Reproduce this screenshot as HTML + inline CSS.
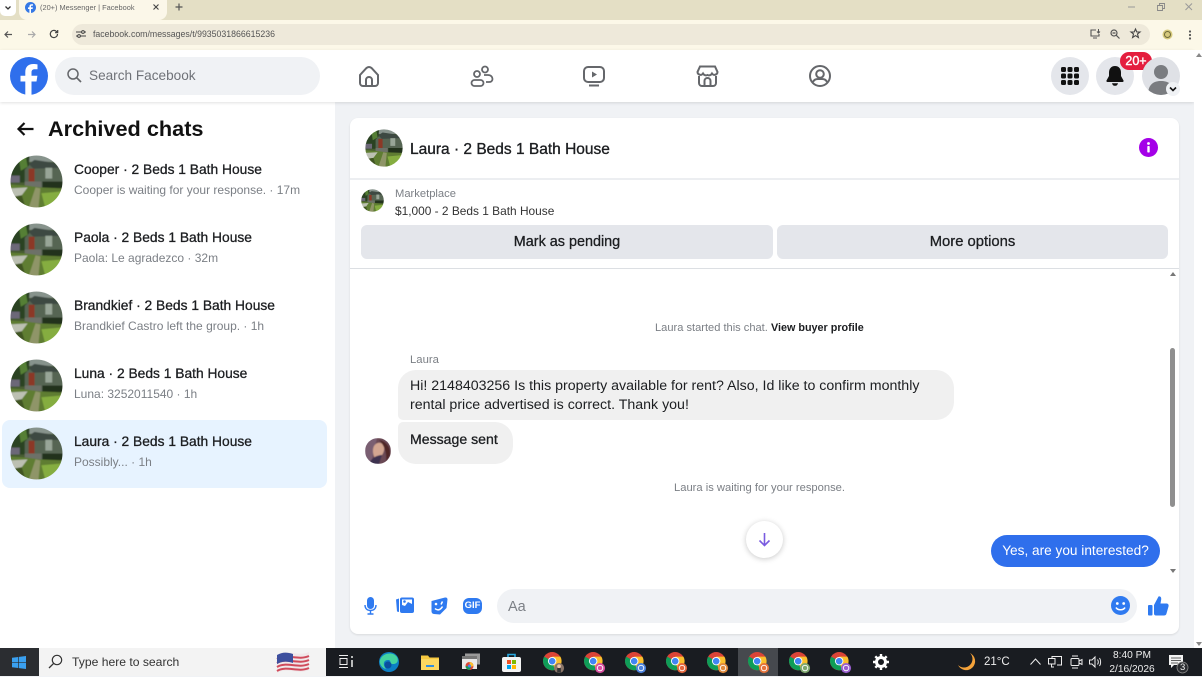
<!DOCTYPE html>
<html><head><meta charset="utf-8"><style>
html,body{margin:0;padding:0}
body{width:1202px;height:676px;position:relative;overflow:hidden;background:#f0f2f5;font-family:"Liberation Sans",sans-serif;color:#1c1e21}
.a{position:absolute;white-space:nowrap}
svg{position:absolute;display:block;overflow:visible}
.nm{font-size:13.800px;font-weight:400;color:#1c1e21;-webkit-text-stroke:.3px #1c1e21;left:74px}
.sb{font-size:12px;color:#7b7f85;left:74px}
</style></head><body>
<svg width="0" height="0" style="position:absolute"><defs>
<clipPath id="c"><circle cx="27" cy="27" r="26.5"/></clipPath>
<filter id="bl" x="0" y="0" width="100%" height="100%"><feGaussianBlur stdDeviation=".5"/></filter>
<symbol id="h" viewBox="0 0 54 54"><g clip-path="url(#c)"><g filter="url(#bl)">
<rect width="54" height="54" fill="#465c30"/>
<rect x="18" y="0" width="36" height="7" fill="#87938c"/>
<path d="M0 0H20L18 28H0Z" fill="#2a4220"/>
<path d="M9 3L16 1 18 12 11 16Z" fill="#557f36"/>
<rect x="0" y="21" width="10" height="7" fill="#6c6878"/>
<path d="M15 15L24 6 45 9 54 16V34H15Z" fill="#566553"/>
<path d="M19 9L25 5 45 8 50 13 24 14Z" fill="#3c4843"/>
<rect x="19" y="14" width="6" height="13" fill="#8c3726"/>
<rect x="36" y="13" width="7" height="11" fill="#98a597"/>
<rect x="15" y="27" width="17" height="6" fill="#6d7168"/>
<rect x="33" y="27" width="21" height="8" fill="#22331a"/>
<path d="M0 30L15 31 30 33 54 34V54H0Z" fill="#5f7d33"/>
<path d="M0 34L18 33 12 41 0 43Z" fill="#bcc0b2"/>
<path d="M26 33L31 34 29 54 19 54Z" fill="#8f9568"/>
<path d="M32 39L54 37V54H36Z" fill="#85ad3f"/>
<path d="M0 43L12 41 16 54H0Z" fill="#3f5524"/>
</g></g></symbol>
<symbol id="cr" viewBox="0 0 24 24">
<circle cx="10" cy="10" r="10" fill="#db4437"/><path d="M1.300 5A10 10 0 0 0 13 19.500L10 10Z" fill="#0f9d58"/><path d="M10 5H19A10 10 0 0 1 13 19.500L10 10Z" fill="#fbc02d"/><circle cx="10" cy="10" r="4.600" fill="#fff"/><circle cx="10" cy="10" r="3.600" fill="#4285f4"/>
</symbol>
</defs></svg>

<!-- Browser chrome -->
<div class="a" style="left:0;top:0;width:1202px;height:20px;background:#e4dfc5"></div>
<div class="a" style="left:0;top:0;width:16px;height:16px;background:#fff;border-radius:0 0 5px 5px"></div>
<svg style="left:4px;top:4px" width="8" height="8" viewBox="0 0 8 8"><path d="M1.500 2.500L4 5 6.500 2.500" fill="none" stroke="#333" stroke-width="1.300"/></svg>
<div class="a" style="left:19px;top:0;width:148px;height:20px;background:#fbf7e9;border-radius:0 0 8px 8px"></div>
<svg style="left:25px;top:2px" width="11" height="11" viewBox="0 0 11 11"><circle cx="5.500" cy="5.500" r="5.500" fill="#3578e5"/><path d="M6 11V7H7.600L7.900 5.400H6V4.500C6 3.900 6.300 3.600 7 3.600H8V2.200H6.600C5.200 2.200 4.400 3 4.400 4.400V5.400H3V7H4.400V11Z" fill="#fff"/></svg>
<div class="a" style="left:40px;top:3px;font-size:7.400px;line-height:9px;color:#666">(20+) Messenger | Facebook</div>
<svg style="left:153px;top:4px" width="6" height="6" viewBox="0 0 6 6"><path d="M.5.5L5.500 5.500M5.500.5L.5 5.500" stroke="#444" stroke-width="1.100"/></svg>
<svg style="left:175px;top:3px" width="8" height="8" viewBox="0 0 8 8"><path d="M4 .5V7.500M.5 4H7.500" stroke="#555" stroke-width="1.200"/></svg>
<svg style="left:1128px;top:6px" width="8" height="2"><path d="M0 1H7" stroke="#999" stroke-width="1"/></svg>
<svg style="left:1157px;top:3px" width="8" height="8" viewBox="0 0 8 8"><path d="M.5 2.500H5.500V7.500H.5ZM2.500 2.500V.5H7.500V5.500H5.500" fill="none" stroke="#888" stroke-width=".9"/></svg>
<svg style="left:1185px;top:3px" width="8" height="8" viewBox="0 0 8 8"><path d="M.5.5L7 7M7 .5L.5 7" stroke="#999" stroke-width="1"/></svg>

<div class="a" style="left:0;top:20px;width:1202px;height:30px;background:#fcf8e8"></div>
<div class="a" style="left:72px;top:24px;width:1078px;height:21px;background:#eee9da;border-radius:11px"></div>
<svg style="left:4px;top:30px" width="9" height="9" viewBox="0 0 9 9"><path d="M8 4.500H1.200M4 1.500L1 4.500 4 7.500" fill="none" stroke="#555" stroke-width="1.200"/></svg>
<svg style="left:27px;top:30px" width="9" height="9" viewBox="0 0 9 9"><path d="M1 4.500H7.800M5 1.500L8 4.500 5 7.500" fill="none" stroke="#aaa" stroke-width="1.200"/></svg>
<svg style="left:49px;top:29px" width="10" height="10" viewBox="0 0 10 10"><path d="M8.500 5A3.600 3.600 0 1 1 7.300 2.300L8.600 3.500M8.700 1V3.700H6" fill="none" stroke="#444" stroke-width="1.200"/></svg>
<svg style="left:76px;top:29px" width="10" height="10" viewBox="0 0 10 10"><path d="M0 3H6M8 3H10M0 7H2M4 7H10" stroke="#444" stroke-width="1.100"/><circle cx="7" cy="3" r="1.400" fill="none" stroke="#444"/><circle cx="3" cy="7" r="1.400" fill="none" stroke="#444"/></svg>
<div class="a" style="left:93px;top:29px;font-size:8.750px;line-height:10px;color:#555">facebook.com/messages/t/9935031866615236</div>
<svg style="left:1090px;top:29px" width="11" height="10" viewBox="0 0 11 10"><path d="M6 1H1V7H9V5M3 9H7" fill="none" stroke="#555" stroke-width="1.100"/><path d="M8.500 0V3.500M7 2.500L8.500 4 10 2.500" fill="none" stroke="#555"/></svg>
<svg style="left:1110px;top:29px" width="10" height="10" viewBox="0 0 10 10"><circle cx="4" cy="4" r="3" fill="none" stroke="#555" stroke-width="1.200"/><path d="M6.300 6.300L9.500 9.500M2.500 4H5.500" stroke="#555" stroke-width="1.200"/></svg>
<svg style="left:1130px;top:28px" width="11" height="11" viewBox="0 0 11 11"><path d="M5.500 1L6.800 4H10L7.500 6 8.400 9.500 5.500 7.600 2.600 9.500 3.500 6 1 4H4.200Z" fill="none" stroke="#444" stroke-width="1.100"/></svg>
<svg style="left:1162px;top:29px" width="11" height="11" viewBox="0 0 11 11"><circle cx="5.500" cy="5.500" r="5" fill="#d6c97c"/><circle cx="5.500" cy="5.500" r="3" fill="none" stroke="#6e6a3a"/></svg>
<svg style="left:1188px;top:30px" width="4" height="10" viewBox="0 0 4 10"><circle cx="2" cy="1.500" r="1.100" fill="#555"/><circle cx="2" cy="5" r="1.100" fill="#555"/><circle cx="2" cy="8.500" r="1.100" fill="#555"/></svg>

<!-- FB top bar -->
<div class="a" style="left:0;top:50px;width:1194px;height:52px;background:#fff;box-shadow:0 1px 3px rgba(0,0,0,.12);z-index:2"></div>
<div class="a" style="left:1194px;top:50px;width:8px;height:598px;background:#fff;z-index:3"></div>
<svg style="left:1196px;top:53px;z-index:4" width="6" height="4"><path d="M0 4L3 0 6 4Z" fill="#888"/></svg>
<svg style="left:1196px;top:642px;z-index:4" width="6" height="4"><path d="M0 0L3 4 6 0Z" fill="#888"/></svg>
<div style="position:absolute;left:0;top:0;z-index:5">
<svg style="left:10px;top:57px" width="38" height="38" viewBox="0 0 38 38"><circle cx="19" cy="19" r="19" fill="#2f6fec"/><path d="M21.500 38V24.500H26.500L27.400 18.800H21.500V15.500C21.500 13.600 22.400 12.300 24.700 12.300H27.500V7.400C26.400 7.200 24.900 7 23.300 7 18.500 7 15.300 9.800 15.300 15V18.800H10.500V24.500H15.300V38Z" fill="#fff"/></svg>
<div class="a" style="left:55px;top:57px;width:265px;height:38px;background:#f0f2f5;border-radius:19px"></div>
<svg style="left:67px;top:68px" width="15" height="15" viewBox="0 0 15 15"><circle cx="6" cy="6" r="5" fill="none" stroke="#65676b" stroke-width="1.500"/><path d="M9.800 9.800L14 14" stroke="#65676b" stroke-width="1.700"/></svg>
<div class="a" style="left:89px;top:68px;font-size:13.600px;line-height:16px;color:#6f7278">Search Facebook</div>

<svg style="left:358px;top:65px" width="22" height="22" viewBox="0 0 22 22"><path d="M2 10L8.500 3A3.500 3.500 0 0 1 13.500 3L20 10V18A3 3 0 0 1 17 21H5A3 3 0 0 1 2 18ZM8 21V15A3 3 0 0 1 14 15V21" fill="none" stroke="#65676b" stroke-width="2"/></svg>
<svg style="left:470px;top:65px" width="24" height="22" viewBox="0 0 24 22"><circle cx="15" cy="4.500" r="3" fill="none" stroke="#65676b" stroke-width="1.800"/><circle cx="7" cy="9" r="3" fill="none" stroke="#65676b" stroke-width="1.800"/><path d="M14 10H18C21 10 22.500 12 22.500 14 22.500 16 21 17 19 17H16" fill="none" stroke="#65676b" stroke-width="1.800"/><rect x="1.500" y="15" width="12" height="6" rx="3" fill="none" stroke="#65676b" stroke-width="1.800"/></svg>
<svg style="left:583px;top:65px" width="22" height="22" viewBox="0 0 22 22"><rect x="1" y="2" width="20" height="15" rx="4" fill="none" stroke="#65676b" stroke-width="2"/><path d="M9 6.500L14 9.500 9 12.500Z" fill="#65676b"/><path d="M6 20.500H16" stroke="#65676b" stroke-width="2"/></svg>
<svg style="left:696px;top:65px" width="23" height="22" viewBox="0 0 23 22"><path d="M3 11V18A3 3 0 0 0 6 21H17A3 3 0 0 0 20 18V11" fill="none" stroke="#65676b" stroke-width="2"/><path d="M4 1.500H19L21.500 7A3 3 0 0 1 16 8.500 3.500 3.500 0 0 1 11.500 10 3.500 3.500 0 0 1 7 8.500 3 3 0 0 1 1.500 7Z" fill="none" stroke="#65676b" stroke-width="2"/><path d="M8.500 21V16A3 3 0 0 1 14.500 16V21" fill="none" stroke="#65676b" stroke-width="2"/></svg>
<svg style="left:809px;top:65px" width="22" height="22" viewBox="0 0 22 22"><circle cx="11" cy="11" r="10" fill="none" stroke="#65676b" stroke-width="2"/><circle cx="11" cy="9" r="3.800" fill="none" stroke="#65676b" stroke-width="2"/><path d="M4 17C5 14.500 7 14 9 14H13C15 14 17 14.500 18 17" fill="none" stroke="#65676b" stroke-width="2"/></svg>

<div class="a" style="left:1051px;top:57px;width:38px;height:38px;border-radius:50%;background:#e4e6eb"></div>
<svg style="left:1061px;top:67px" width="18" height="18" viewBox="0 0 18 18"><g fill="#111"><rect width="5" height="5" rx="1.500"/><rect x="6.500" width="5" height="5" rx="1.500"/><rect x="13" width="5" height="5" rx="1.500"/><rect y="6.500" width="5" height="5" rx="1.500"/><rect x="6.500" y="6.500" width="5" height="5" rx="1.500"/><rect x="13" y="6.500" width="5" height="5" rx="1.500"/><rect y="13" width="5" height="5" rx="1.500"/><rect x="6.500" y="13" width="5" height="5" rx="1.500"/><rect x="13" y="13" width="5" height="5" rx="1.500"/></g></svg>
<div class="a" style="left:1096px;top:57px;width:38px;height:38px;border-radius:50%;background:#e4e6eb"></div>
<svg style="left:1106px;top:66px" width="18" height="20" viewBox="0 0 18 20"><path d="M9 0C5 0 3 3 3 6.500V10L.5 14.500C.2 15.200.6 16 1.500 16H16.500C17.400 16 17.800 15.200 17.500 14.500L15 10V6.500C15 3 13 0 9 0Z" fill="#111"/><path d="M6 17.200H12C11.600 19 10.500 19.800 9 19.800 7.500 19.800 6.400 19 6 17.200Z" fill="#111"/></svg>
<div class="a" style="left:1120px;top:52px;width:32px;height:18px;border-radius:9px;background:#e41e3f;color:#fff;font-size:12.500px;font-weight:400;-webkit-text-stroke:.4px #fff;text-align:center;line-height:18px">20+</div>
<div class="a" style="left:1142px;top:57px;width:38px;height:38px;border-radius:50%;background:#dfe1e6;overflow:hidden"><svg style="left:0;top:0" width="38" height="38" viewBox="0 0 38 38"><circle cx="19" cy="15" r="7" fill="#7a7c80"/><path d="M6 38C6 27 12 24 19 24S32 27 32 38Z" fill="#7a7c80"/></svg></div>
<div class="a" style="left:1166px;top:82px;width:14px;height:14px;border-radius:50%;background:#f0f2f5"></div>
<svg style="left:1169px;top:86px" width="8" height="6" viewBox="0 0 8 6"><path d="M1 1.500L4 4.500 7 1.500" fill="none" stroke="#111" stroke-width="1.600"/></svg>
</div>

<!-- Left sidebar -->
<div class="a" style="left:0;top:102px;width:335px;height:546px;background:#fff"></div>
<svg style="left:17px;top:122px" width="17" height="14" viewBox="0 0 17 14"><path d="M16.500 7H2M7.500 1L1.500 7 7.500 13" fill="none" stroke="#111" stroke-width="2.200"/></svg>
<div class="a" style="left:48px;top:116px;font-size:21.700px;font-weight:700;color:#111">Archived chats</div>

<div class="a" style="left:2px;top:420px;width:325px;height:68px;background:#e7f3ff;border-radius:8px"></div>
<svg style="left:10px;top:155px" width="53" height="53"><use href="#h"/></svg>
<svg style="left:10px;top:223px" width="53" height="53"><use href="#h"/></svg>
<svg style="left:10px;top:291px" width="53" height="53"><use href="#h"/></svg>
<svg style="left:10px;top:359px" width="53" height="53"><use href="#h"/></svg>
<svg style="left:10px;top:427px" width="53" height="53"><use href="#h"/></svg>

<div class="a nm" style="top:162px">Cooper · 2 Beds 1 Bath House</div>
<div class="a sb" style="top:183px">Cooper is waiting for your response. · 17m</div>
<div class="a nm" style="top:230px">Paola · 2 Beds 1 Bath House</div>
<div class="a sb" style="top:251px">Paola: Le agradezco · 32m</div>
<div class="a nm" style="top:298px">Brandkief · 2 Beds 1 Bath House</div>
<div class="a sb" style="top:319px">Brandkief Castro left the group. · 1h</div>
<div class="a nm" style="top:366px">Luna · 2 Beds 1 Bath House</div>
<div class="a sb" style="top:387px">Luna: 3252011540 · 1h</div>
<div class="a nm" style="top:434px">Laura · 2 Beds 1 Bath House</div>
<div class="a sb" style="top:455px">Possibly... · 1h</div>

<!-- Chat panel -->
<div class="a" style="left:350px;top:118px;width:829px;height:516px;background:#fff;border-radius:8px;box-shadow:0 1px 2px rgba(0,0,0,.1)"></div>
<svg style="left:365px;top:129px" width="38" height="38"><use href="#h"/></svg>
<div class="a" style="left:410px;top:141px;font-size:15.500px;color:#1c1e21;-webkit-text-stroke:.35px #1c1e21">Laura · 2 Beds 1 Bath House</div>
<svg style="left:1139px;top:138px" width="19" height="19" viewBox="0 0 19 19"><circle cx="9.500" cy="9.500" r="9.500" fill="#a400e8"/><circle cx="9.500" cy="5.500" r="1.400" fill="#fff"/><rect x="8.300" y="8" width="2.400" height="6.500" rx=".8" fill="#fff"/></svg>
<div class="a" style="left:350px;top:178px;width:829px;height:2px;background:#eceef1"></div>
<svg style="left:361px;top:189px" width="23" height="23"><use href="#h"/></svg>
<div class="a" style="left:395px;top:188px;font-size:11.200px;color:#7b7f85">Marketplace</div>
<div class="a" style="left:395px;top:204px;font-size:11.900px;color:#333">$1,000 - 2 Beds 1 Bath House</div>
<div class="a" style="left:361px;top:225px;width:412px;height:34px;background:#e4e6eb;border-radius:6px;text-align:center;line-height:34px;font-size:14.400px;color:#1c1e21;-webkit-text-stroke:.3px #1c1e21">Mark as pending</div>
<div class="a" style="left:777px;top:225px;width:391px;height:34px;background:#e4e6eb;border-radius:6px;text-align:center;line-height:34px;font-size:14.800px;color:#1c1e21;-webkit-text-stroke:.3px #1c1e21">More options</div>
<div class="a" style="left:350px;top:268px;width:829px;height:1px;background:#dcdfe3"></div>

<svg style="left:1170px;top:272px" width="6" height="4"><path d="M0 4L3 0 6 4Z" fill="#777"/></svg>
<div class="a" style="left:1170px;top:348px;width:5px;height:159px;background:#8f8f8f;border-radius:3px"></div>
<svg style="left:1170px;top:569px" width="6" height="4"><path d="M0 0L3 4 6 0Z" fill="#777"/></svg>

<div class="a" style="left:655px;top:322px;font-size:11.100px;color:#7b7f85">Laura started this chat. <span style="color:#1c1e21;font-weight:700;font-size:10.800px">View buyer profile</span></div>
<div class="a" style="left:410px;top:354px;font-size:11.300px;color:#7b7f85">Laura</div>
<div class="a" style="left:398px;top:370px;width:556px;height:50px;background:#f0f0f0;border-radius:18px 18px 18px 5px"></div>
<div class="a" style="left:410px;top:377px;font-size:14.200px;line-height:19px;color:#1c1e21">Hi! 2148403256 Is this property available for rent? Also, Id like to confirm monthly<br>rental price advertised is correct. Thank you!</div>
<div class="a" style="left:398px;top:422px;width:115px;height:42px;background:#f0f0f0;border-radius:5px 18px 18px 18px"></div>
<div class="a" style="left:410px;top:431px;font-size:14.100px;color:#1c1e21;-webkit-text-stroke:.3px #1c1e21">Message sent</div>
<svg style="left:365px;top:438px" width="26" height="26" viewBox="0 0 26 26"><defs><clipPath id="p"><circle cx="13" cy="13" r="13"/></clipPath></defs><g clip-path="url(#p)" filter="url(#bl)"><rect width="26" height="26" fill="#6b4a55"/><path d="M0 0H12L6 26H0Z" fill="#7a5f72"/><path d="M9 8C12 3 18 4 19 9 20 14 16 20 11 22 8 18 7 12 9 8Z" fill="#d3a691"/><path d="M14 2C21 3 26 9 25 17L21 24C22 16 20 8 14 2Z" fill="#4f2528"/><path d="M4 26C6 20 12 17 17 17L14 26Z" fill="#3e3250"/></g></svg>
<div class="a" style="left:674px;top:482px;font-size:11.200px;color:#7b7f85">Laura is waiting for your response.</div>

<div class="a" style="left:746px;top:521px;width:37px;height:37px;border-radius:50%;background:#fff;box-shadow:0 1px 6px rgba(0,0,0,.22)"></div>
<svg style="left:758px;top:532px" width="13" height="15" viewBox="0 0 13 15"><path d="M6.500 1V13.500M1.500 8.500L6.500 13.500 11.500 8.500" fill="none" stroke="#7a5be0" stroke-width="1.600"/></svg>
<div class="a" style="left:991px;top:535px;width:169px;height:32px;background:#2f6fec;border-radius:16px;color:#fff;text-align:center;line-height:32px;font-size:13.650px">Yes, are you interested?</div>

<!-- Composer -->
<svg style="left:364px;top:597px" width="13" height="18" viewBox="0 0 13 18"><rect x="3" y="0" width="7" height="12" rx="3.500" fill="#2f7af0"/><path d="M1 8C1 11.500 3 13.500 6.500 13.500S12 11.500 12 8M6.500 13.500V16.500M3.500 17H9.500" fill="none" stroke="#2f7af0" stroke-width="1.400"/></svg>
<svg style="left:396px;top:597px" width="18" height="17" viewBox="0 0 18 17"><path d="M0 2.500L3 1.500V15L1 14.500Z" fill="#2f7af0"/><rect x="4" y="0.500" width="14" height="15.500" rx="2" fill="#2f7af0"/><path d="M6 2.500H16V7L12 5 9 9 6 8Z" fill="#fff"/><circle cx="8.500" cy="4.500" r="1.300" fill="#2f7af0"/></svg>
<svg style="left:430px;top:597px" width="18" height="18" viewBox="0 0 18 18"><path d="M1.500 4L15 .5C16.500.2 17.500 1 17.500 2.500L16.500 11 10 17.500 4 17C2.500 16.800 1.700 16 1.500 14.500Z" fill="#2f7af0"/><circle cx="6" cy="7" r="1.300" fill="#fff"/><path d="M12.500 4.500L11 7.500M5 11.500C7.500 14 10.500 13 12.500 9.500" fill="none" stroke="#fff" stroke-width="1.500"/></svg>
<div class="a" style="left:463px;top:598px;width:19px;height:16px;background:#2f7af0;border-radius:6px;color:#fff;font-size:9.500px;font-weight:700;line-height:16px;text-align:center">GIF</div>
<div class="a" style="left:497px;top:589px;width:640px;height:34px;background:#f0f2f5;border-radius:17px"></div>
<div class="a" style="left:508px;top:599px;font-size:14.500px;color:#7b7f85">Aa</div>
<svg style="left:1111px;top:596px" width="19" height="19" viewBox="0 0 19 19"><circle cx="9.500" cy="9.500" r="9.500" fill="#2f7af0"/><circle cx="6.300" cy="7.500" r="1.400" fill="#fff"/><circle cx="12.700" cy="7.500" r="1.400" fill="#fff"/><path d="M5 11.500C6.500 14.500 12.500 14.500 14 11.500" fill="none" stroke="#fff" stroke-width="1.500"/></svg>
<svg style="left:1148px;top:596px" width="21" height="20" viewBox="0 0 21 20"><rect x="0" y="9" width="4.500" height="10.500" rx="1" fill="#2f7af0"/><path d="M6 9L10.500 .5C12.500 0 13.500 1.500 13.200 3.500L12.500 7.500H18.500C20 7.500 21 8.800 20.500 10.500L18.500 17.500C18.200 19 17 19.500 16 19.500H8C6.800 19.500 6 18.800 6 17.500Z" fill="#2f7af0"/></svg>

<!-- Taskbar -->
<div class="a" style="left:0;top:648px;width:1202px;height:28px;background:#191c21;z-index:6"></div>
<div style="position:absolute;left:0;top:0;z-index:7">
<div class="a" style="left:0;top:648px;width:39px;height:28px;background:#2b2d31"></div>
<svg style="left:12px;top:656px" width="14" height="13" viewBox="0 0 14 13"><path d="M0 1.800L6.300 1V6.200H0ZM7 .9L14 0V6.200H7ZM0 6.900H6.300V12L0 11.200ZM7 6.900H14V13L7 12.100Z" fill="#3aa0f0"/></svg>
<div class="a" style="left:39px;top:648px;width:287px;height:28px;background:#f3f3f3"></div>
<svg style="left:48px;top:654px" width="15" height="15" viewBox="0 0 15 15"><circle cx="9" cy="6" r="4.700" fill="none" stroke="#333" stroke-width="1.200"/><path d="M5.600 9.400L1 14" stroke="#333" stroke-width="1.300"/></svg>
<div class="a" style="left:72px;top:655px;font-size:12.150px;line-height:15px;color:#333">Type here to search</div>
<svg style="left:276px;top:649px" width="34" height="27" viewBox="0 0 34 27"><path d="M1 6C10 0 22 8 33 3V21C22 26 10 18 1 24Z" fill="#f0e8ea"/><path d="M1 10C10 4 22 12 33 7M1 14C10 8 22 16 33 11M1 18C10 12 22 20 33 15M1 22C10 16 22 24 33 19" fill="none" stroke="#d04b5c" stroke-width="2"/><path d="M1 6C6 3 11 3 17 5V14C11 12 6 12 1 15Z" fill="#3d4f9e"/></svg>
<svg style="left:339px;top:655px" width="15" height="13" viewBox="0 0 15 13"><path d="M0 .5H9M0 12.500H9M1 3.500H8V9.500H1Z" fill="none" stroke="#eee" stroke-width="1"/><path d="M13 1V3M13 5V12" stroke="#eee" stroke-width="1.500"/></svg>
<svg style="left:379px;top:652px" width="20" height="20" viewBox="0 0 20 20"><circle cx="10" cy="10" r="10" fill="#0c7fc4"/><path d="M1 8C3 1 14-1 18 5 20 9 18 12 14 12 10 12 13 8 9 8 5 8 3 12 7 17 3 16 0 12 1 8Z" fill="#44d3a0"/><circle cx="9" cy="13" r="3.500" fill="#0b4f9e"/></svg>
<svg style="left:421px;top:654px" width="18" height="16" viewBox="0 0 18 16"><path d="M0 1.500H7L8.500 3.500H18V16H0Z" fill="#f7c940"/><rect x="0" y="5" width="18" height="11" fill="#fcd860"/><rect x="5" y="11" width="8" height="2" fill="#2f8ee0"/></svg>
<svg style="left:462px;top:653px" width="18" height="18" viewBox="0 0 18 18"><rect x="3" y="0.500" width="15" height="11" fill="#9a9a9a"/><rect x="0" y="3" width="15" height="13" fill="#e8e8e8"/><rect x="0" y="3" width="15" height="3" fill="#777"/><circle cx="7.500" cy="13" r="4" fill="#db4437"/><path d="M3.500 13A4 4 0 0 0 7.500 17L9 14Z" fill="#0f9d58"/><path d="M7.500 9A4 4 0 0 1 11.500 13L8 14Z" fill="#fbc02d"/><circle cx="7.500" cy="13" r="1.500" fill="#4285f4"/></svg>
<svg style="left:502px;top:653px" width="19" height="19" viewBox="0 0 19 19"><rect x="0" y="4" width="19" height="15" rx="2" fill="#f3f3f3"/><path d="M6 4V1.500H13V4" fill="none" stroke="#29a9e0" stroke-width="1.600"/><rect x="5" y="7" width="4" height="4" fill="#f25022"/><rect x="10" y="7" width="4" height="4" fill="#7fba00"/><rect x="5" y="12" width="4" height="4" fill="#00a4ef"/><rect x="10" y="12" width="4" height="4" fill="#ffb900"/></svg>

<div class="a" style="left:738px;top:648px;width:40px;height:28px;background:#46494e"></div>
<svg style="left:543px;top:652px" width="22" height="22" viewBox="0 0 24 24"><use href="#cr" width="24" height="24"/><circle cx="17.500" cy="17.500" r="5.500" fill="#8a7568"/><circle cx="17.500" cy="15.500" r="2" fill="#e9c6ae"/><rect x="15.500" y="17.500" width="4" height="5" fill="#333"/></svg>
<svg style="left:584px;top:652px" width="22" height="22" viewBox="0 0 24 24"><use href="#cr" width="24" height="24"/><circle cx="17.500" cy="17.500" r="5.500" fill="#d94fa0"/><circle cx="17.500" cy="17.500" r="3" fill="none" stroke="#fff" stroke-width="1"/></svg>
<svg style="left:625px;top:652px" width="22" height="22" viewBox="0 0 24 24"><use href="#cr" width="24" height="24"/><circle cx="17.500" cy="17.500" r="5.500" fill="#4a80dc"/><circle cx="17.500" cy="17.500" r="3" fill="none" stroke="#fff" stroke-width="1"/></svg>
<svg style="left:666px;top:652px" width="22" height="22" viewBox="0 0 24 24"><use href="#cr" width="24" height="24"/><circle cx="17.500" cy="17.500" r="5.500" fill="#e5663c"/><circle cx="17.500" cy="17.500" r="3" fill="none" stroke="#fff" stroke-width="1"/></svg>
<svg style="left:707px;top:652px" width="22" height="22" viewBox="0 0 24 24"><use href="#cr" width="24" height="24"/><circle cx="17.500" cy="17.500" r="5.500" fill="#e08a3c"/><circle cx="17.500" cy="17.500" r="3" fill="none" stroke="#fff" stroke-width="1"/></svg>
<svg style="left:748px;top:652px" width="22" height="22" viewBox="0 0 24 24"><use href="#cr" width="24" height="24"/><circle cx="17.500" cy="17.500" r="5.500" fill="#e5733c"/><circle cx="17.500" cy="17.500" r="3" fill="none" stroke="#fff" stroke-width="1"/></svg>
<svg style="left:789px;top:652px" width="22" height="22" viewBox="0 0 24 24"><use href="#cr" width="24" height="24"/><circle cx="17.500" cy="17.500" r="5.500" fill="#7fa86f"/><circle cx="17.500" cy="17.500" r="3" fill="none" stroke="#fff" stroke-width="1"/></svg>
<svg style="left:830px;top:652px" width="22" height="22" viewBox="0 0 24 24"><use href="#cr" width="24" height="24"/><circle cx="17.500" cy="17.500" r="5.500" fill="#9a5fd0"/><circle cx="17.500" cy="17.500" r="3" fill="none" stroke="#fff" stroke-width="1"/></svg>
<svg style="left:873px;top:654px" width="16" height="16" viewBox="0 0 16 16"><circle cx="8" cy="8" r="4.500" fill="none" stroke="#fff" stroke-width="3"/><path d="M8 0V3M8 13V16M0 8H3M13 8H16M2.300 2.300L4.500 4.500M11.500 11.500L13.700 13.700M13.700 2.300L11.500 4.500M4.500 11.500L2.300 13.700" stroke="#fff" stroke-width="2.400"/></svg>

<svg style="left:958px;top:652px" width="20" height="20" viewBox="0 0 20 20"><path d="M12 1A9 9 0 1 1 0 13 8 8 0 0 0 12 1Z" fill="#f5a33a"/></svg>
<div class="a" style="left:984px;top:655px;font-size:11.500px;line-height:15px;color:#eee">21°C</div>
<svg style="left:1030px;top:658px" width="11" height="7" viewBox="0 0 11 7"><path d="M.5 6.500L5.500 1 10.500 6.500" fill="none" stroke="#eee" stroke-width="1"/></svg>
<svg style="left:1048px;top:656px" width="14" height="13" viewBox="0 0 14 13"><path d="M4 2.500V.5H13.500V9H9M.5 2.500H7V8H.5ZM3.500 8V11H6" fill="none" stroke="#eee" stroke-width="1"/></svg>
<svg style="left:1070px;top:655px" width="13" height="14" viewBox="0 0 13 14"><rect x="1" y="3.500" width="8" height="7" rx="1" fill="none" stroke="#eee"/><path d="M9 6L12 4.500V9.500L9 8M2 1H8M2 13H8" fill="none" stroke="#eee"/></svg>
<svg style="left:1089px;top:656px" width="14" height="12" viewBox="0 0 14 12"><path d="M.5 4H3L6 1V11L3 8H.5ZM8.500 3.500C9.500 5 9.500 7 8.500 8.500M10.500 2C12 4 12 8 10.500 10" fill="none" stroke="#eee"/></svg>
<div class="a" style="left:1102px;top:649px;width:60px;text-align:center;font-size:10.200px;line-height:14px;color:#eee">8:40 PM<br>2/16/2026</div>
<svg style="left:1169px;top:655px" width="20" height="19" viewBox="0 0 20 19"><path d="M0 0H14V10H5L2 13V10H0Z" fill="#f3f3f3"/><path d="M2 3H12M2 5.500H12M2 8H9" stroke="#333" stroke-width=".8"/><circle cx="13.500" cy="12.500" r="5.500" fill="#2b2d31" stroke="#888" stroke-width=".8"/></svg>
<div class="a" style="left:1180px;top:662px;font-size:9.500px;color:#eee">3</div>
</div>
</body></html>
